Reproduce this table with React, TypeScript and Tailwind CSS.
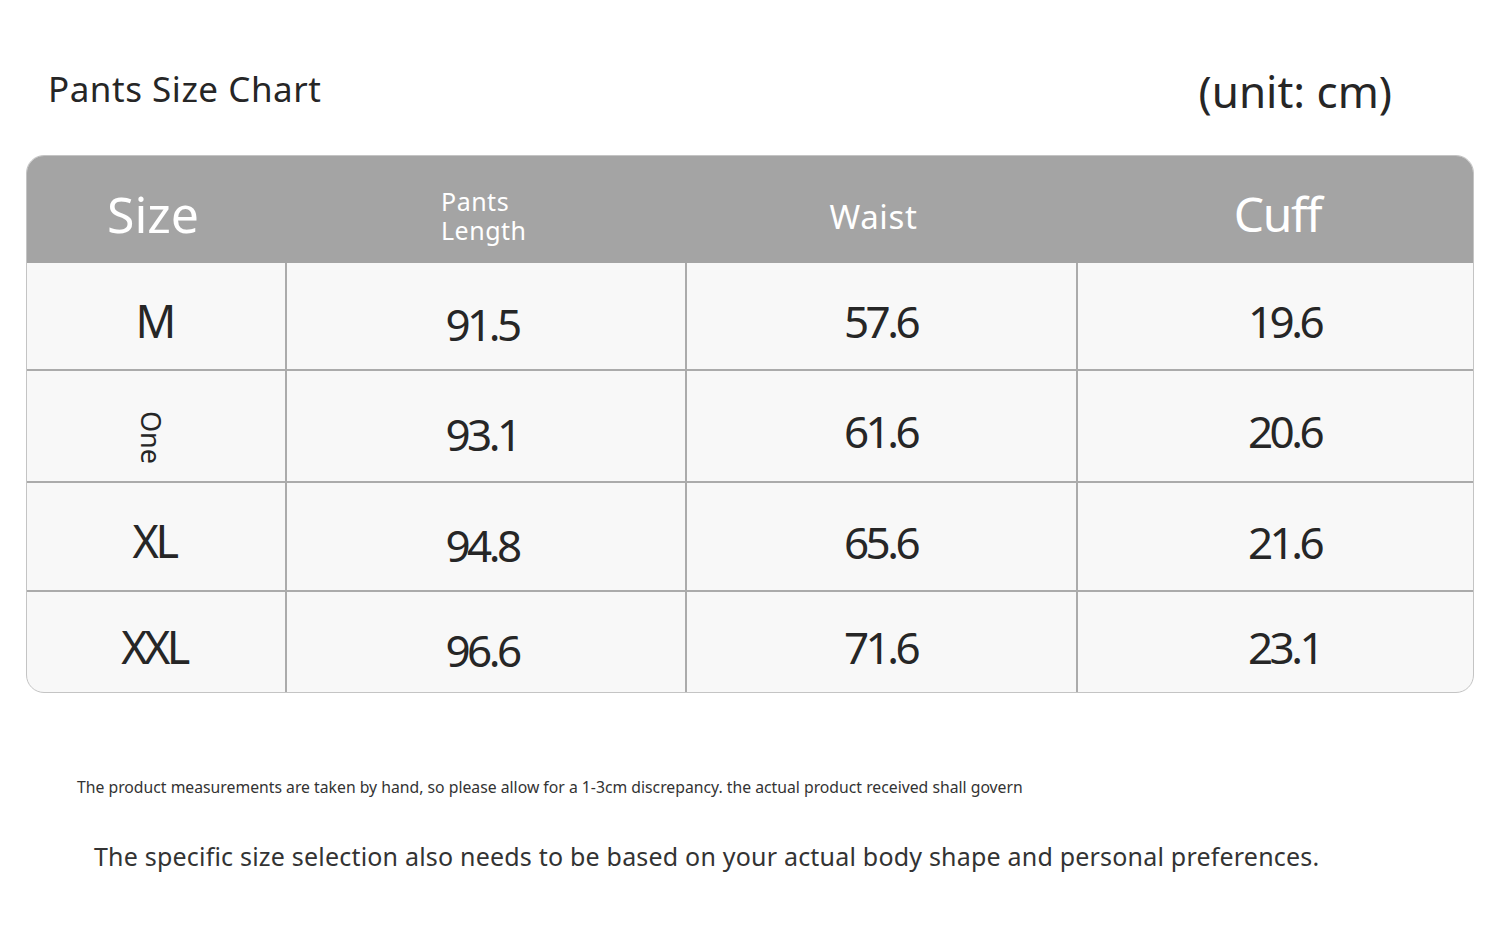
const rows = [
  { size: "M", length: "91.5", waist: "57.6", cuff: "19.6", h: "h-[106px]" },
  { size: "One", length: "93.1", waist: "61.6", cuff: "20.6", h: "h-[112px]", vertical: true },
  { size: "XL", length: "94.8", waist: "65.6", cuff: "21.6", h: "h-[109px]" },
  { size: "XXL", length: "96.6", waist: "71.6", cuff: "23.1", h: "h-[102px]" },
];

const font = { fontFamily: '"Noto Sans", "Open Sans", sans-serif' };

export default function App() {
  return (
    <div className="w-[1500px] h-[937px] bg-white text-[#262626] overflow-hidden" style={font}>
      <div className="flex items-center justify-between pl-[48px] pr-[108px] pt-[62px] h-[155px] pb-[35px]">
        <h1 className="text-[35px] leading-none tracking-[0.015em] -mt-[6px]">Pants Size Chart</h1>
        <div className="text-[44px] leading-none pl-[4px]">(unit: cm)</div>
      </div>

      <div className="mx-[26px] w-[1448px] rounded-[18px] border border-[#c4c4c4] bg-[#f8f8f8] overflow-hidden">
        <div className="grid grid-cols-[258px_400px_391px_1fr] h-[107px] bg-[#a4a4a4] text-white">
          <div className="flex items-center justify-center text-[50px] leading-none pt-[8px] pr-[6px]">Size</div>
          <div className="flex flex-col items-center justify-center pt-[12px] pr-[4px]">
            <span className="w-[84px] text-[25px] leading-[27px] tracking-[0.02em]">Pants</span>
            <span className="w-[84px] text-[25px] leading-[27px] tracking-[0.02em] mt-[2px]">Length</span>
          </div>
          <div className="flex items-center justify-center text-[33px] leading-none tracking-[0.02em] pt-[14px] pr-[14px]">Waist</div>
          <div className="flex items-center justify-center text-[48px] leading-none tracking-[-0.03em] pt-[8px] pl-[6px]">Cuff</div>
        </div>
        {rows.map((r, i) => (
          <div
            key={r.size}
            className={`grid grid-cols-[258px_400px_391px_1fr] ${r.h} ${i > 0 ? "border-t-2 border-[#ababab]" : ""}`}
          >
            <div className="flex items-center justify-center">
              {r.vertical ? (
                <span className="text-[27px] leading-none [writing-mode:vertical-rl] -ml-[10px] pt-[24px]">{r.size}</span>
              ) : (
                <span className="text-[45px] leading-none tracking-[-0.08em] pt-[8px] pr-[4px]">{r.size}</span>
              )}
            </div>
            <div className="flex items-center justify-center border-l-2 border-[#ababab]">
              <span className="text-[44px] leading-none tracking-[-0.08em] pt-[16px] pr-[8px]">{r.length}</span>
            </div>
            <div className="flex items-center justify-center border-l-2 border-[#ababab]">
              <span className="text-[44px] leading-none tracking-[-0.08em] pt-[10px] pr-[2px]">{r.waist}</span>
            </div>
            <div className="flex items-center justify-center border-l-2 border-[#ababab]">
              <span className="text-[44px] leading-none tracking-[-0.08em] pt-[10px] pl-[18px]">{r.cuff}</span>
            </div>
          </div>
        ))}
      </div>

      <p className="pl-[77px] mt-[87px] text-[15.75px] leading-none text-[#333]">
        The product measurements are taken by hand, so please allow for a 1-3cm discrepancy. the actual product received shall govern
      </p>
      <p className="pl-[94px] mt-[48px] text-[25px] leading-none tracking-[0.008em] text-[#333]">
        The specific size selection also needs to be based on your actual body shape and personal preferences.
      </p>
    </div>
  );
}
